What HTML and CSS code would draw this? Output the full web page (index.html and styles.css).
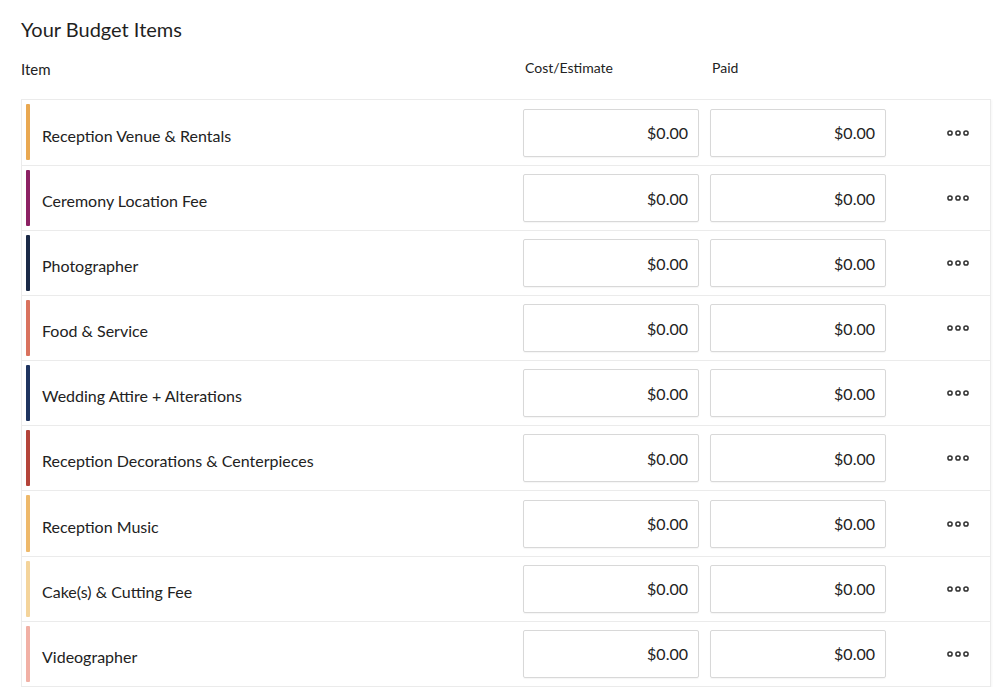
FILE: index.html
```html
<!DOCTYPE html>
<html lang="en">
<head>
<meta charset="utf-8">
<title>Your Budget Items</title>
<link rel="stylesheet" href="styles.css">
</head>
<body>
<main class="budget">
  <h1 class="budget-title">Your Budget Items</h1>
  <div class="budget-head">
    <div class="head-item">Item</div>
    <div class="head-col">Cost/Estimate</div>
    <div class="head-col head-paid">Paid</div>
    <div class="head-actions"></div>
  </div>
  <div class="budget-table">
    <div class="row"><span class="bar c1"></span><span class="label">Reception Venue &amp; Rentals</span><div class="field">$0.00</div><div class="field paid">$0.00</div><div class="actions"><svg class="dots" viewBox="0 0 22 6" width="22" height="6"><circle cx="3" cy="3" r="2.1"/><circle cx="11" cy="3" r="2.1"/><circle cx="19" cy="3" r="2.1"/></svg></div></div>
    <div class="row"><span class="bar c2"></span><span class="label">Ceremony Location Fee</span><div class="field">$0.00</div><div class="field paid">$0.00</div><div class="actions"><svg class="dots" viewBox="0 0 22 6" width="22" height="6"><circle cx="3" cy="3" r="2.1"/><circle cx="11" cy="3" r="2.1"/><circle cx="19" cy="3" r="2.1"/></svg></div></div>
    <div class="row"><span class="bar c3"></span><span class="label">Photographer</span><div class="field">$0.00</div><div class="field paid">$0.00</div><div class="actions"><svg class="dots" viewBox="0 0 22 6" width="22" height="6"><circle cx="3" cy="3" r="2.1"/><circle cx="11" cy="3" r="2.1"/><circle cx="19" cy="3" r="2.1"/></svg></div></div>
    <div class="row"><span class="bar c4"></span><span class="label">Food &amp; Service</span><div class="field">$0.00</div><div class="field paid">$0.00</div><div class="actions"><svg class="dots" viewBox="0 0 22 6" width="22" height="6"><circle cx="3" cy="3" r="2.1"/><circle cx="11" cy="3" r="2.1"/><circle cx="19" cy="3" r="2.1"/></svg></div></div>
    <div class="row"><span class="bar c5"></span><span class="label">Wedding Attire + Alterations</span><div class="field">$0.00</div><div class="field paid">$0.00</div><div class="actions"><svg class="dots" viewBox="0 0 22 6" width="22" height="6"><circle cx="3" cy="3" r="2.1"/><circle cx="11" cy="3" r="2.1"/><circle cx="19" cy="3" r="2.1"/></svg></div></div>
    <div class="row"><span class="bar c6"></span><span class="label">Reception Decorations &amp; Centerpieces</span><div class="field">$0.00</div><div class="field paid">$0.00</div><div class="actions"><svg class="dots" viewBox="0 0 22 6" width="22" height="6"><circle cx="3" cy="3" r="2.1"/><circle cx="11" cy="3" r="2.1"/><circle cx="19" cy="3" r="2.1"/></svg></div></div>
    <div class="row"><span class="bar c7"></span><span class="label">Reception Music</span><div class="field">$0.00</div><div class="field paid">$0.00</div><div class="actions"><svg class="dots" viewBox="0 0 22 6" width="22" height="6"><circle cx="3" cy="3" r="2.1"/><circle cx="11" cy="3" r="2.1"/><circle cx="19" cy="3" r="2.1"/></svg></div></div>
    <div class="row"><span class="bar c8"></span><span class="label">Cake(s) &amp; Cutting Fee</span><div class="field">$0.00</div><div class="field paid">$0.00</div><div class="actions"><svg class="dots" viewBox="0 0 22 6" width="22" height="6"><circle cx="3" cy="3" r="2.1"/><circle cx="11" cy="3" r="2.1"/><circle cx="19" cy="3" r="2.1"/></svg></div></div>
    <div class="row"><span class="bar c9"></span><span class="label">Videographer</span><div class="field">$0.00</div><div class="field paid">$0.00</div><div class="actions"><svg class="dots" viewBox="0 0 22 6" width="22" height="6"><circle cx="3" cy="3" r="2.1"/><circle cx="11" cy="3" r="2.1"/><circle cx="19" cy="3" r="2.1"/></svg></div></div>
  </div>
</main>
</body>
</html>
```

FILE: styles.css
```css
* { box-sizing: border-box; }

html, body {
  margin: 0;
  padding: 0;
  background: #ffffff;
}

body {
  font-family: Lato, "Open Sans", "Liberation Sans", sans-serif;
  color: #222222;
}

.budget {
  padding: 17px 0 0 21px;
  width: 991px;
}

.budget-title {
  margin: 0 0 19px;
  font-size: 20px;
  line-height: 24px;
  font-weight: 400;
  color: #1f1f1f;
}

.budget-head {
  display: flex;
  align-items: flex-end;
  height: 18px;
  margin-bottom: 21px;
}

.head-item {
  width: 502px;
  font-size: 15px;
  line-height: 18px;
}

.head-col {
  width: 176px;
  padding-left: 2px;
  font-size: 14px;
  line-height: 18px;
  position: relative;
  top: -1px;
}

.head-paid {
  margin-left: 11px;
}

.head-actions {
  width: 105px;
}

.budget-table {
  width: 970px;
  border: 1px solid #ebebeb;
  box-shadow: 1px 1px 2px rgba(0, 0, 0, 0.04);
}

.row {
  display: flex;
  align-items: center;
  height: 65.1px;
  border-bottom: 1px solid #ebebeb;
}

.row:first-child {
  height: 66px;
}

.row:last-child {
  border-bottom: none;
  height: 64px;
}

.bar {
  align-self: stretch;
  width: 4px;
  margin: 4px 0 4px 4px;
  border-radius: 1px;
}

.row:first-child .bar {
  margin-bottom: 5px;
}

.c1 { background: #e9a851; }
.c2 { background: #8c2163; }
.c3 { background: #1b2a47; }
.c4 { background: #d9725e; }
.c5 { background: #1f3460; }
.c6 { background: #b4443a; }
.c7 { background: #eeb96b; }
.c8 { background: #f4d49b; }
.c9 { background: #f1b0a5; }

.label {
  flex: 1;
  padding: 5px 0 0 12px;
  font-size: 16px;
  line-height: 19px;
  color: #222222;
}

.field {
  width: 176px;
  height: 48px;
  border: 1px solid #d8d8d8;
  border-radius: 2px;
  box-shadow: 0 1px 1px rgba(0, 0, 0, 0.04);
  display: flex;
  align-items: center;
  justify-content: flex-end;
  padding-right: 10px;
  font-size: 16px;
  color: #222222;
}

.field.paid {
  margin-left: 11px;
}

.actions {
  width: 104px;
  padding-left: 61px;
  display: flex;
  align-items: center;
}

.dots {
  display: block;
  fill: none;
  stroke: #333333;
  stroke-width: 1.5;
}
```
